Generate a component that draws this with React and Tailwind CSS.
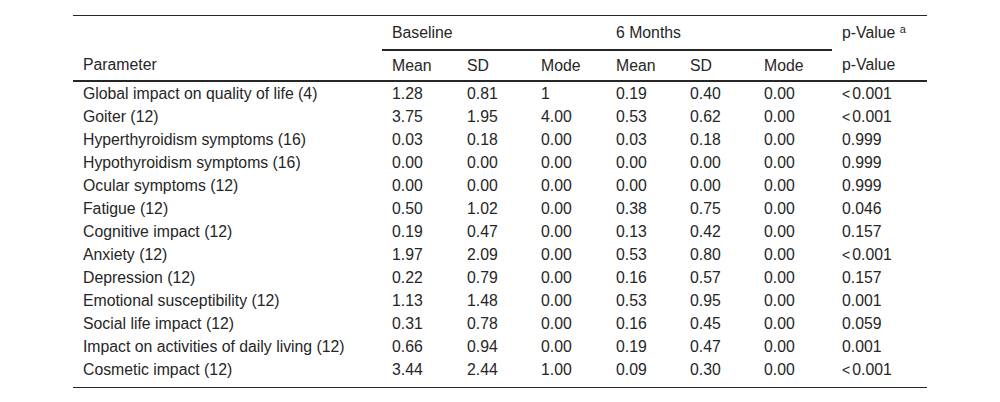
const rows = [
  ['Global impact on quality of life (4)', '1.28', '0.81', '1', '0.19', '0.40', '0.00', '< 0.001'],
  ['Goiter (12)', '3.75', '1.95', '4.00', '0.53', '0.62', '0.00', '< 0.001'],
  ['Hyperthyroidism symptoms (16)', '0.03', '0.18', '0.00', '0.03', '0.18', '0.00', '0.999'],
  ['Hypothyroidism symptoms (16)', '0.00', '0.00', '0.00', '0.00', '0.00', '0.00', '0.999'],
  ['Ocular symptoms (12)', '0.00', '0.00', '0.00', '0.00', '0.00', '0.00', '0.999'],
  ['Fatigue (12)', '0.50', '1.02', '0.00', '0.38', '0.75', '0.00', '0.046'],
  ['Cognitive impact (12)', '0.19', '0.47', '0.00', '0.13', '0.42', '0.00', '0.157'],
  ['Anxiety (12)', '1.97', '2.09', '0.00', '0.53', '0.80', '0.00', '< 0.001'],
  ['Depression (12)', '0.22', '0.79', '0.00', '0.16', '0.57', '0.00', '0.157'],
  ['Emotional susceptibility (12)', '1.13', '1.48', '0.00', '0.53', '0.95', '0.00', '0.001'],
  ['Social life impact (12)', '0.31', '0.78', '0.00', '0.16', '0.45', '0.00', '0.059'],
  ['Impact on activities of daily living (12)', '0.66', '0.94', '0.00', '0.19', '0.47', '0.00', '0.001'],
  ['Cosmetic impact (12)', '3.44', '2.44', '1.00', '0.09', '0.30', '0.00', '< 0.001'],
];

const subHeads = ['Mean', 'SD', 'Mode', 'Mean', 'SD', 'Mode'];

const PValue = ({ v }) =>
  v.startsWith('<') ? (
    <span>
      <span className="text-[14px] leading-[0]">&lt;</span>
      <span className="ml-[2px]">{v.slice(2)}</span>
    </span>
  ) : (
    v
  );

export default function App() {
  return (
    <div className="w-full h-[402px] bg-white pt-[15px] text-[15.8px] leading-[23px] text-[#262626]" style={{ fontFamily: '"Liberation Sans", Arial, sans-serif' }}>
      <table className="w-[854px] mx-auto table-fixed border-collapse">
        <colgroup>
          <col className="w-[309px]" />
          <col className="w-[75px]" />
          <col className="w-[74px]" />
          <col className="w-[75px]" />
          <col className="w-[74px]" />
          <col className="w-[74px]" />
          <col className="w-[78px]" />
          <col className="w-[95px]" />
        </colgroup>
        <thead>
          <tr className="h-[34px] border-t border-[#262626]">
            <th />
            <th colSpan={3} className="pl-[10px] text-left font-normal align-middle border-b-2 border-[#262626]">
              Baseline
            </th>
            <th colSpan={3} className="pl-[10px] text-left font-normal align-middle border-b-2 border-[#262626]">
              6 Months
            </th>
            <th className="pl-[10px] text-left font-normal align-middle whitespace-nowrap">
              p-Value <sup className="text-[11px]">a</sup>
            </th>
          </tr>
          <tr className="h-[31px] border-b-2 border-[#262626]">
            <th className="pl-[10px] text-left font-normal">Parameter</th>
            {subHeads.map((h, i) => (
              <th key={i} className="pl-[10px] text-left font-normal">
                {h}
              </th>
            ))}
            <th className="pl-[10px] text-left font-normal">p-Value</th>
          </tr>
        </thead>
        <tbody className="border-b border-[#262626]">
          {rows.map((r, i) => (
            <tr key={i} className={i === rows.length - 1 ? 'h-[30px] align-top' : 'h-[23px]'}>
              {r.map((c, j) => (
                <td key={j} className="pl-[10px] whitespace-nowrap">
                  {j === 7 ? <PValue v={c} /> : c}
                </td>
              ))}
            </tr>
          ))}
        </tbody>
      </table>
    </div>
  );
}
